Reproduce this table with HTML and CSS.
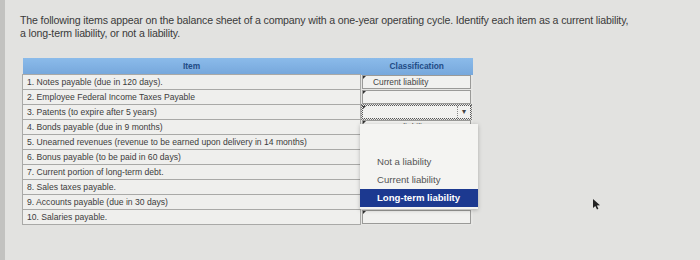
FILE: index.html
```html
<!DOCTYPE html>
<html lang="en">
<head>
    <meta charset="UTF-8">
    <title>Classify liabilities</title>
    <link rel="stylesheet" href="styles.css">
</head>
<body>

<p class="intro">The following items appear on the balance sheet of a company with a one-year operating cycle. Identify each item as a current liability, a long-term liability, or not a liability.</p>

<div class="sheet">
    <table class="items">
        <thead>
            <tr>
                <th class="col-item">Item</th>
                <th class="col-class">Classification</th>
            </tr>
        </thead>
        <tbody>
            <tr><td>1. Notes payable (due in 120 days).</td><td class="pick"><div class="select">Current liability</div></td></tr>
            <tr><td>2. Employee Federal Income Taxes Payable</td><td class="pick"><div class="select"></div></td></tr>
            <tr><td>3. Patents (to expire after 5 years)</td><td class="pick"><div class="select focused"><span class="arrow">&#9662;</span></div></td></tr>
            <tr><td>4. Bonds payable (due in 9 months)</td><td class="pick"><div class="select">Current liability</div></td></tr>
            <tr><td>5. Unearned revenues (revenue to be earned upon delivery in 14 months)</td><td class="pick"><div class="select"></div></td></tr>
            <tr><td>6. Bonus payable (to be paid in 60 days)</td><td class="pick"><div class="select"></div></td></tr>
            <tr><td>7. Current portion of long-term debt.</td><td class="pick"><div class="select"></div></td></tr>
            <tr><td>8. Sales taxes payable.</td><td class="pick"><div class="select"></div></td></tr>
            <tr><td>9. Accounts payable (due in 30 days)</td><td class="pick"><div class="select"></div></td></tr>
            <tr><td>10. Salaries payable.</td><td class="pick"><div class="select"></div></td></tr>
        </tbody>
    </table>

    <!-- open dropdown of the select in row 3 -->
    <ul class="options">
        <li class="blank"></li>
        <li>Not a liability</li>
        <li>Current liability</li>
        <li class="active">Long-term liability</li>
    </ul>

    <svg class="cursor" width="8" height="11" viewBox="0 0 8 11">
        <path d="M0 0 L0 9 L2.3 7 L4 10.5 L5.4 9.8 L3.8 6.5 L7 6.3 Z" fill="#222"/>
    </svg>
</div>

</body>
</html>
```

FILE: styles.css
```css
body {
    margin: 0;
    height: 260px;
    background: #e2e2e0;
    border-left: 5px solid #c2c2c0;
    font-family: "Liberation Sans", Arial, sans-serif;
    color: #3a3a3a;
    overflow: hidden;
}
.intro {
    margin: 0;
    padding: 14px 0 0 15px;
    width: 612px;
    font-size: 10.6px;
    line-height: 13px;
    letter-spacing: -0.15px;
}
.sheet {
    position: relative;
    margin: 18px 0 0 17px;
    width: 460px;
}
.items {
    border-collapse: collapse;
    width: 451px;
    font-size: 8.6px;
    color: #3c3c3c;
}
.items th {
    background: linear-gradient(#8bbbea, #77a8dc);
    color: #1f4c86;
    font-weight: bold;
    height: 16px;
    padding: 0;
    font-size: 8.4px;
    text-align: center;
}
.col-item {
    width: 338px;
}
.items td {
    height: 14px;
    padding: 0 0 0 4px;
    background: #efefed;
    border: 1px solid #a9a9a7;
    white-space: nowrap;
}
.items td.pick {
    padding: 0 2px 0 1px;
    border-top: none;
    border-bottom: none;
    border-right: none;
    background: #e6e6e4;
}
.select {
    position: relative;
    height: 12px;
    line-height: 12px;
    border: 1px solid #9a9a98;
    background: #f1f1ef;
    padding-left: 10px;
    font-size: 8.4px;
    color: #444;
}
/* tiny marker in the corner of each answer box */
.select::before {
    content: "";
    position: absolute;
    left: 0;
    top: 0;
    border-left: 3px solid #333;
    border-bottom: 3px solid transparent;
}
.select.focused {
    border: 1px dotted #555;
    outline: 1px dotted #777;
}
.arrow {
    position: absolute;
    right: 0;
    top: 0;
    width: 12px;
    height: 12px;
    border-left: 1px dotted #888;
    font-size: 8px;
    text-align: center;
    color: #444;
}
.options {
    position: absolute;
    left: 338px;
    top: 66px;
    width: 118px;
    margin: 0;
    padding: 0 0 2px;
    list-style: none;
    background: #f4f4f2;
    box-shadow: 0 1px 4px rgba(0, 0, 0, 0.25);
    font-size: 9.6px;
    color: #555;
}
.options li {
    height: 18px;
    line-height: 18px;
    padding-left: 17px;
}
.options li.blank {
    height: 29px;
}
.options li.active {
    background: #1c3990;
    color: #fff;
    font-weight: bold;
}
.cursor {
    position: absolute;
    left: 571px;
    top: 141px;
}
```
